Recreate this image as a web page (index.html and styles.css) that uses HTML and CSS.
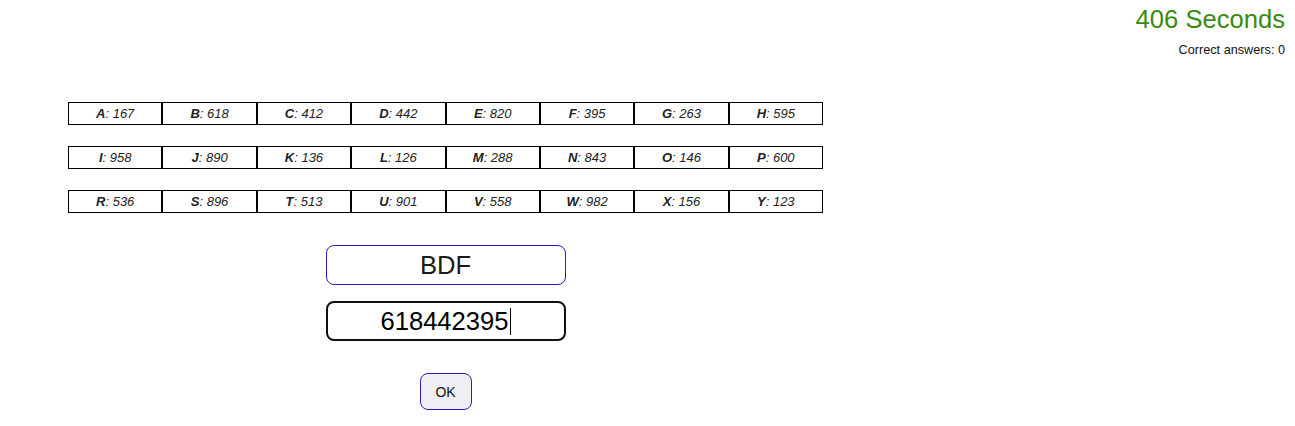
FILE: index.html
```html
<!DOCTYPE html>
<html>
<head>
<meta charset="utf-8">
<link rel="stylesheet" href="styles.css">
</head>
<body>
<header class="status">
  <div class="timer">406 Seconds</div>
  <div class="score">Correct answers: 0</div>
</header>
<main class="game">
  <table class="codes">
    <tr><td><b>A</b>: 167</td><td><b>B</b>: 618</td><td><b>C</b>: 412</td><td><b>D</b>: 442</td><td><b>E</b>: 820</td><td><b>F</b>: 395</td><td><b>G</b>: 263</td><td><b>H</b>: 595</td></tr>
  </table>
  <table class="codes">
    <tr><td><b>I</b>: 958</td><td><b>J</b>: 890</td><td><b>K</b>: 136</td><td><b>L</b>: 126</td><td><b>M</b>: 288</td><td><b>N</b>: 843</td><td><b>O</b>: 146</td><td><b>P</b>: 600</td></tr>
  </table>
  <table class="codes">
    <tr><td><b>R</b>: 536</td><td><b>S</b>: 896</td><td><b>T</b>: 513</td><td><b>U</b>: 901</td><td><b>V</b>: 558</td><td><b>W</b>: 982</td><td><b>X</b>: 156</td><td><b>Y</b>: 123</td></tr>
  </table>
  <div class="form">
    <div class="field question">BDF</div>
    <div class="field answer">618442395<span class="caret"></span></div>
    <button class="ok">OK</button>
  </div>
</main>
</body>
</html>
```
FILE: styles.css
```css
html, body {
  margin: 0;
  padding: 0;
  background: #fff;
  font-family: "Liberation Sans", Arial, sans-serif;
  color: #222;
}
.status {
  display: flex;
  flex-direction: column;
  align-items: flex-end;
  padding: 4px 10px 0 0;
}
.timer {
  font-size: 25.6px;
  line-height: 30px;
  color: #3b8a0e;
}
.score {
  font-size: 12.7px;
  line-height: 15px;
  margin-top: 9px;
  color: #111;
}
.game {
  width: 755px;
  margin: 44px 0 0 68px;
  display: flex;
  flex-direction: column;
}
.codes {
  width: 755px;
  border-collapse: separate;
  border-spacing: 0;
  table-layout: fixed;
  margin-bottom: 21px;
}
.codes td {
  border: 1px solid #000;
  height: 21px;
  padding: 0;
  text-align: center;
  font-style: italic;
  font-size: 13px;
  color: #222;
}
.codes td b {
  font-weight: bold;
}
.form {
  display: flex;
  flex-direction: column;
  align-items: center;
  margin-top: 11px;
}
.field {
  box-sizing: border-box;
  width: 240px;
  height: 40px;
  border-radius: 8px;
  display: flex;
  align-items: center;
  justify-content: center;
  font-size: 25.6px;
  color: #1a1a1a;
}
.question {
  border: 1px solid #3a16c0;
}
.answer {
  border: 2px solid #111;
  margin-top: 16px;
  color: #000;
}
.caret {
  display: inline-block;
  width: 1px;
  height: 27px;
  background: #000;
  margin-left: 1px;
}
.ok {
  margin-top: 32px;
  width: 52px;
  height: 37px;
  border: 1px solid #3a16c0;
  border-radius: 8px;
  background: #efeff3;
  font-family: "Liberation Sans", Arial, sans-serif;
  font-size: 14px;
  color: #111;
  padding: 0;
}
```
